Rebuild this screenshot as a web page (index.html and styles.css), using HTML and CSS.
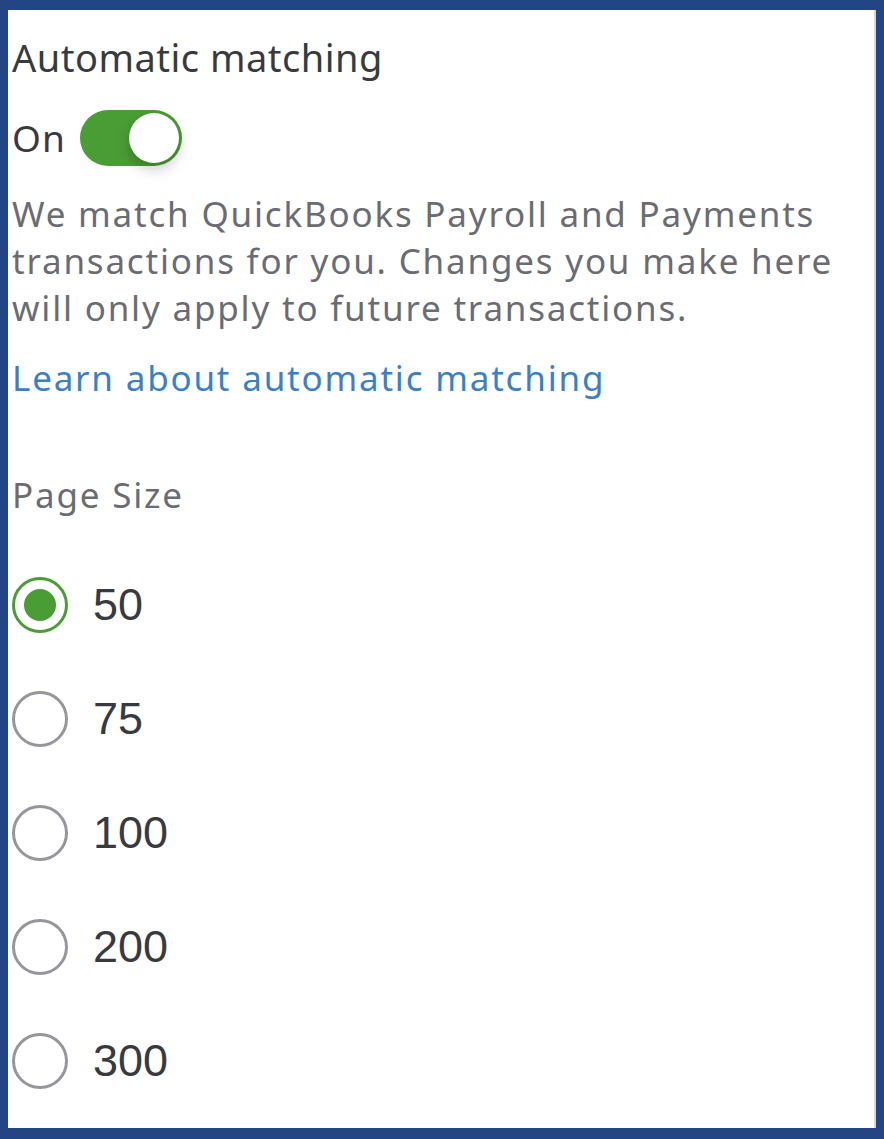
FILE: index.html
```html
<!DOCTYPE html>
<html lang="en">
<head>
    <meta charset="UTF-8">
    <meta name="viewport" content="width=device-width, initial-scale=1.0">
    <title>Automatic matching</title>
    <link rel="stylesheet" href="styles.css">
</head>
<body>

    <div class="frame">
        <div class="panel">
            <!-- Automatic matching -->
            <h2 class="title">Automatic matching</h2>

            <div class="switch-row">
                <span class="switch-label">On</span>
                <span class="switch on"><span class="knob"></span></span>
            </div>

            <p class="desc">We match QuickBooks Payroll and Payments transactions for you. Changes you make here will only apply to future transactions.</p>

            <a class="learn" href="#">Learn about automatic matching</a>

            <!-- Page size -->
            <h3 class="subtitle">Page Size</h3>

            <div class="radios">
                <label class="radio-row"><span class="radio checked"></span><span class="radio-text">50</span></label>
                <label class="radio-row"><span class="radio"></span><span class="radio-text">75</span></label>
                <label class="radio-row"><span class="radio"></span><span class="radio-text">100</span></label>
                <label class="radio-row"><span class="radio"></span><span class="radio-text">200</span></label>
                <label class="radio-row"><span class="radio"></span><span class="radio-text">300</span></label>
            </div>
        </div>
    </div>

</body>
</html>
```

FILE: styles.css
```css
html, body {
    margin: 0;
    height: 100%;
}
body {
    font-family: "Noto Sans", sans-serif;
    background-color: #244583;
}
.frame {
    box-sizing: border-box;
    height: 1139px;
    padding: 10px 8px 11px 8px;
}
.panel {
    box-sizing: border-box;
    height: 100%;
    background-color: #fff;
    border-right: 2px solid #d4d6da;
    padding: 25px 4px 0 4px;
}
.title {
    margin: 0;
    font-size: 38px;
    font-weight: 400;
    letter-spacing: 0.5px;
    color: #393a3d;
    line-height: 44px;
}
.switch-row {
    display: flex;
    align-items: center;
    gap: 14px;
    margin-top: 31px;
}
.switch-label {
    font-size: 37px;
    letter-spacing: 1px;
    color: #393a3d;
    line-height: 50px;
}
.switch {
    position: relative;
    width: 102px;
    height: 56px;
    border-radius: 28px;
    background-color: #4a9c35;
}
.switch .knob {
    position: absolute;
    top: 3px;
    right: 3px;
    width: 50px;
    height: 50px;
    border-radius: 50%;
    background-color: #fff;
    box-shadow: 0 6px 14px rgba(0, 0, 0, 0.22);
}
.desc {
    margin: 24px 0 0 0;
    font-size: 35px;
    letter-spacing: 1.8px;
    line-height: 47px;
    color: #6b6c72;
}
.learn {
    display: block;
    margin-top: 23px;
    font-size: 35px;
    letter-spacing: 1.8px;
    line-height: 47px;
    color: #3a80c8;
    text-decoration: none;
}
.subtitle {
    margin: 70px 0 0 0;
    font-size: 35px;
    font-weight: 400;
    letter-spacing: 1.8px;
    line-height: 47px;
    color: #6b6c72;
}
.radios {
    display: flex;
    flex-direction: column;
    gap: 58px;
    margin-top: 59px;
}
.radio-row {
    display: flex;
    align-items: center;
    gap: 25px;
    height: 56px;
}
.radio {
    box-sizing: border-box;
    width: 56px;
    height: 56px;
    border-radius: 50%;
    border: 3px solid #95979c;
    display: flex;
    align-items: center;
    justify-content: center;
}
.radio.checked {
    border-color: #4a9c35;
}
.radio.checked::after {
    content: "";
    width: 32px;
    height: 32px;
    border-radius: 50%;
    background-color: #4a9c35;
}
.radio-text {
    font-family: "Liberation Sans", "Roboto", sans-serif;
    font-size: 45px;
    color: #393a3d;
}
```
